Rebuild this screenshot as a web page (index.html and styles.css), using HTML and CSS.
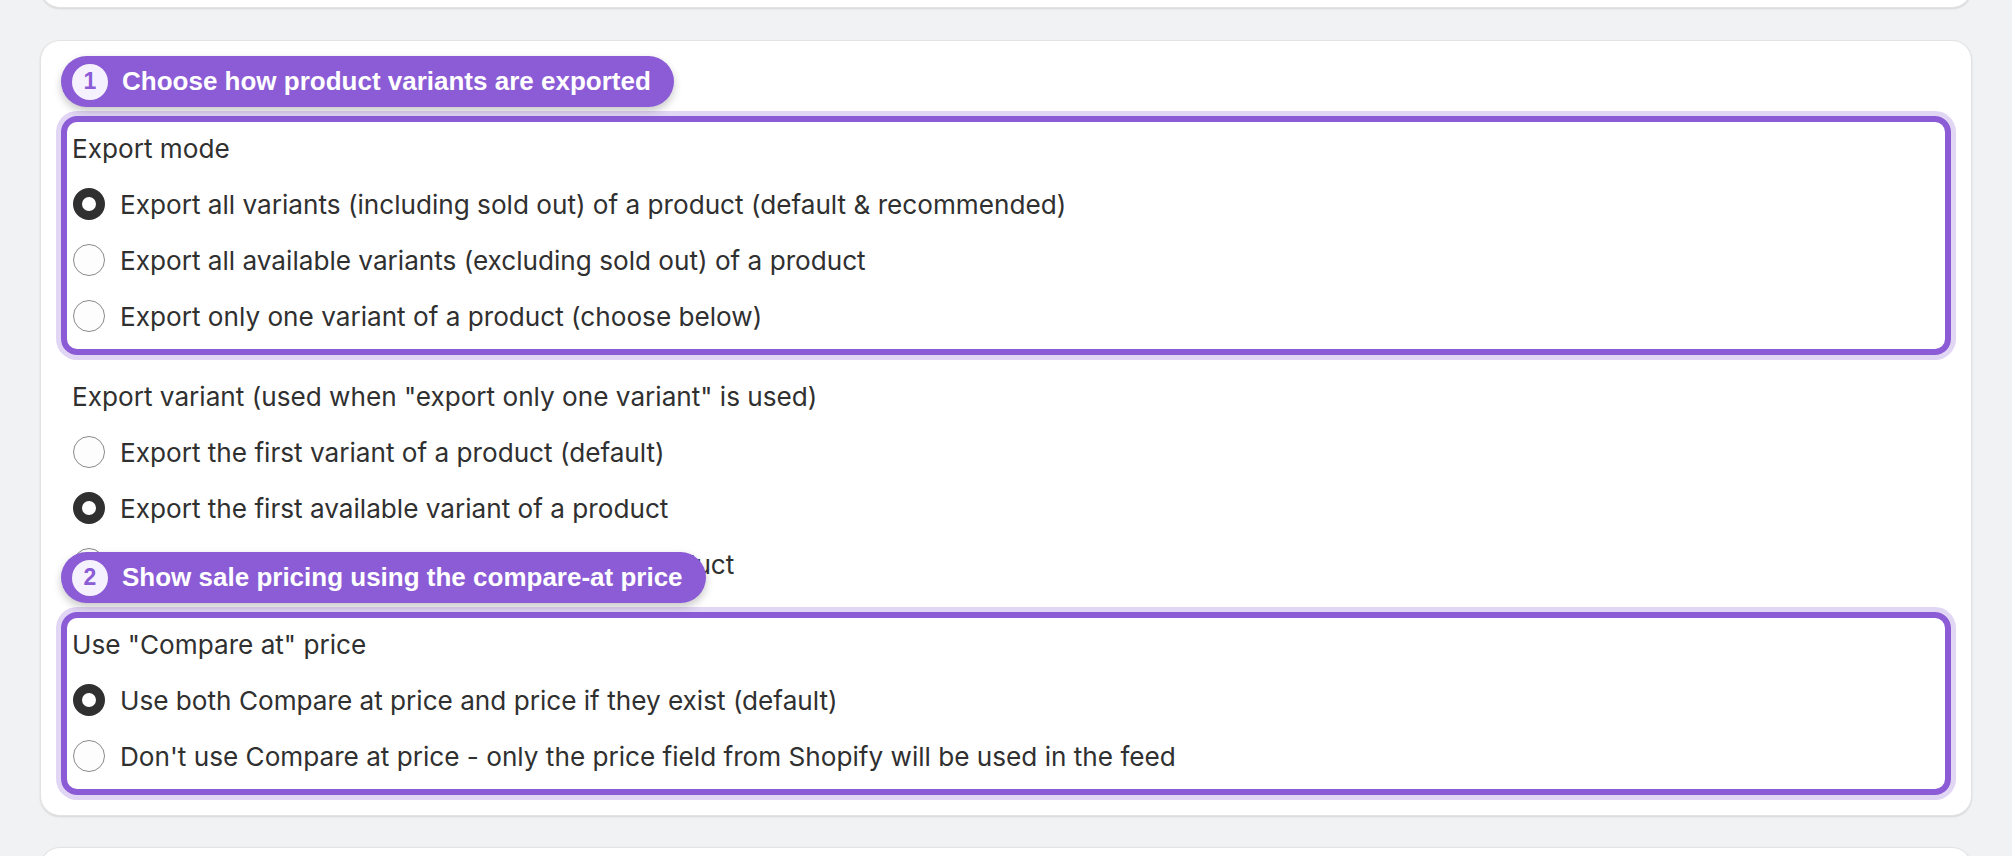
FILE: index.html
```html
<!DOCTYPE html>
<html lang="en">
<head>
  <meta charset="UTF-8" />
  <title>Feed settings – Variants</title>
  <link rel="stylesheet" href="styles.css">
</head>
<body>
  <div class="page">
    <div class="card card-prev"></div>

    <div class="card">
      <!-- Step 1 -->
      <div class="field highlight">
        <div class="tour-badge"><span class="tour-num">1</span>Choose how product variants are exported</div>
        <div class="field-label">Export mode</div>
        <label class="radio-row"><span class="radio checked"></span>Export all variants (including sold out) of a product (default &amp; recommended)</label>
        <label class="radio-row"><span class="radio"></span>Export all available variants (excluding sold out) of a product</label>
        <label class="radio-row"><span class="radio"></span>Export only one variant of a product (choose below)</label>
      </div>

      <div class="field">
        <div class="field-label">Export variant (used when "export only one variant" is used)</div>
        <label class="radio-row"><span class="radio"></span>Export the first variant of a product (default)</label>
        <label class="radio-row"><span class="radio checked"></span>Export the first available variant of a product</label>
        <label class="radio-row"><span class="radio"></span>Export the cheapest available variant of a product</label>
      </div>

      <!-- Step 2 -->
      <div class="field highlight">
        <div class="tour-badge"><span class="tour-num">2</span>Show sale pricing using the compare-at price</div>
        <div class="field-label">Use "Compare at" price</div>
        <label class="radio-row"><span class="radio checked"></span>Use both Compare at price and price if they exist (default)</label>
        <label class="radio-row"><span class="radio"></span>Don't use Compare at price - only the price field from Shopify will be used in the feed</label>
      </div>
    </div>

    <div class="card card-next"></div>
  </div>
</body>
</html>
```

FILE: styles.css
```css
body {
  margin: 0;
  background: #f1f2f4;
  font-family: 'Inter', 'Noto Sans', sans-serif;
  color: #303030;
  overflow: hidden;
}

.page {
  display: flex;
  flex-direction: column;
  gap: 31px;
  padding: 0 40px;
}

.card {
  background: white;
  border: 1px solid #e3e3e3;
  border-radius: 20px;
  box-shadow: 0 1px 2px rgba(0, 0, 0, 0.12);
  padding: 87px 32px 32px;
  display: flex;
  flex-direction: column;
  gap: 33px;
}

.card-prev {
  height: 60px;
  padding: 0;
  margin-top: -54px;
  margin-bottom: 1px;
}

.card-next {
  height: 100px;
  padding: 0;
}

.field {
  position: relative;
  display: flex;
  flex-direction: column;
  gap: 16px;
  padding-bottom: 7px;
}

.field.highlight {
  margin: -12px -12px;
  padding: 6px 6px 13px;
  border: 6px solid #8b5cd6;
  border-radius: 16px;
  box-shadow: 0 0 0 5px #e2d6f5;
}

.field-label,
.radio-row {
  height: 40px;
  display: flex;
  align-items: center;
  font-size: 26.15px;
  white-space: nowrap;
}

.field-label {
  margin-left: -1px;
}

.radio-row {
  gap: 15px;
}

.radio {
  width: 32px;
  height: 32px;
  border-radius: 50%;
  box-sizing: border-box;
  border: 1px solid #8a8a8a;
  background: #fdfdfd;
  flex: none;
}

.radio.checked {
  border: 9px solid #303030;
  background: white;
}

.tour-badge {
  position: absolute;
  top: -66px;
  left: -6px;
  z-index: 2;
  height: 51px;
  display: flex;
  align-items: center;
  gap: 14px;
  padding: 0 23px 0 11px;
  background: #8b5cd6;
  border-radius: 26px;
  box-shadow: 0 4px 8px rgba(0, 0, 0, 0.22);
  color: white;
  font-family: 'Liberation Sans', Arial, sans-serif;
  font-weight: bold;
  font-size: 26px;
  white-space: nowrap;
}

.tour-num {
  width: 36px;
  height: 36px;
  border-radius: 50%;
  background: #f6f1fe;
  color: #8b5cd6;
  display: flex;
  align-items: center;
  justify-content: center;
  font-size: 23px;
}
```
